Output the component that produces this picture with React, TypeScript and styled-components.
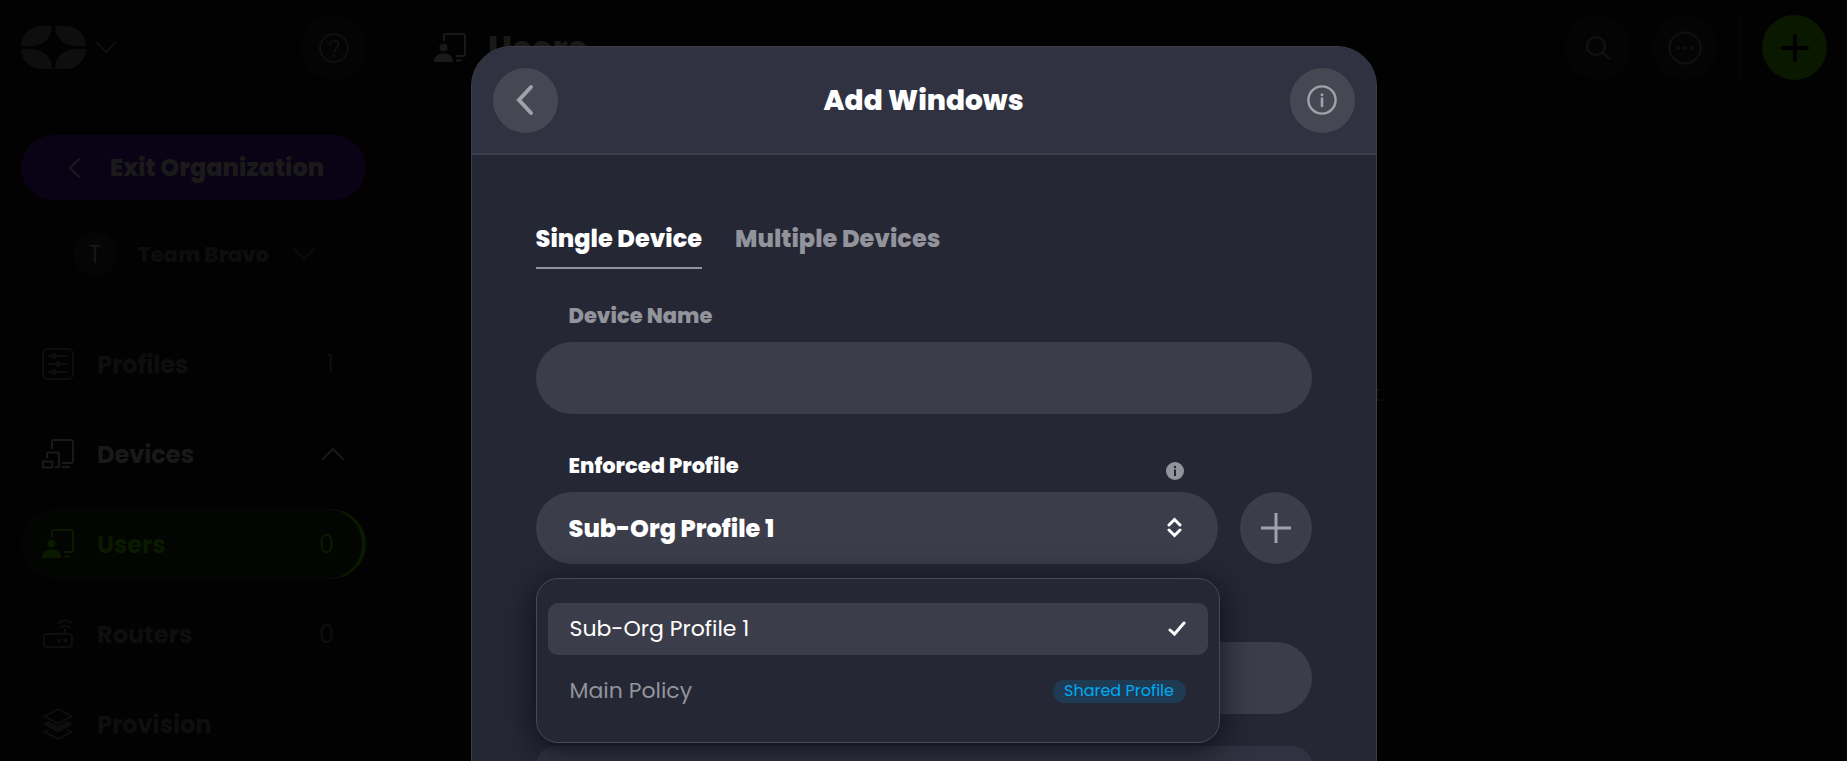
import React, { useState } from "react";
import styled, { createGlobalStyle } from "styled-components";

const GlobalStyle = createGlobalStyle`
  * { box-sizing: border-box; }
  html, body, #root { height: 100%; }
  body {
    margin: 0;
    overflow: hidden;
    background: #020202;
    font-family: Poppins, Inter, "Noto Sans", sans-serif;
    -webkit-font-smoothing: antialiased;
  }
  button, input, select { font: inherit; color: inherit; }
  button { border: 0; padding: 0; background: none; cursor: pointer; }
  a { color: inherit; text-decoration: none; }
  h1, h2, p, ul { margin: 0; padding: 0; }
  svg { display: block; flex: none; }
`;

const Shell = styled.div`
  display: flex;
  height: 100vh;
`;

const Sidebar = styled.aside`
  flex: 0 0 411px;
  padding: 15px 0 0 21px;
  border-right: 1px solid #060606;
  overflow: hidden;
`;

const BrandRow = styled.div`
  display: flex;
  align-items: center;
  gap: 10px;
  height: 65px;
  margin-bottom: 33px;
  padding-right: 44px;
  color: #0e0e0e;
`;

const Push = styled.span`
  flex: 1;
`;

const Divider = styled.div`
  height: 1px;
  background: #050505;
`;

const IconButton = styled.button<{ $size?: number; $bg?: string; $fg?: string }>`
  display: grid;
  place-items: center;
  flex: none;
  width: ${(p) => p.$size ?? 65}px;
  height: ${(p) => p.$size ?? 65}px;
  border-radius: 50%;
  background: ${(p) => p.$bg ?? "#040404"};
  color: ${(p) => p.$fg ?? "#101010"};
`;

const ExitButton = styled.button`
  display: flex;
  align-items: center;
  gap: 28px;
  width: 345px;
  height: 65px;
  margin: 21px 0 32px;
  padding-left: 47px;
  border-radius: 33px;
  background: #0a0315;
  color: #1a1a1a;
  font-size: 24px;
  font-weight: 800;
`;

const TeamButton = styled.button`
  display: flex;
  align-items: center;
  width: 345px;
  height: 44px;
  margin-bottom: 32px;
  padding-left: 52px;
  color: #0d0d0d;
  font-size: 21px;
  font-weight: 800;
`;

const Avatar = styled.span`
  display: grid;
  place-items: center;
  width: 44px;
  height: 44px;
  margin-right: 21px;
  border-radius: 50%;
  background: #050505;
  color: #161616;
  font-size: 24px;
  font-weight: 400;
`;

const TeamName = styled.span`
  width: 155px;
  text-align: left;
`;

const Nav = styled.nav`
  display: flex;
  flex-direction: column;
  gap: 20px;
  margin-top: 20px;
`;

const NavLink = styled.a<{ $tone: "muted" | "open" | "active" }>`
  display: flex;
  align-items: center;
  flex: none;
  gap: 23px;
  width: 345px;
  height: 70px;
  padding: 0 22px 0 21px;
  border-radius: 35px;
  color: ${(p) => ({ muted: "#0e0e0e", open: "#191919", active: "#0a1a00" })[p.$tone]};
  ${(p) =>
    p.$tone === "active" &&
    "background: #020501; box-shadow: inset -4px 0 0 #0a1a00;"}
  font-size: 24px;
  font-weight: 700;
`;

const NavToggle = styled.span`
  margin-left: auto;
`;

const NavCount = styled.span`
  margin-left: auto;
  padding-right: 10px;
  font-weight: 400;
`;

const Main = styled.main`
  flex: 1;
  display: flex;
  flex-direction: column;
  min-width: 0;
`;

const TopBar = styled.header`
  display: flex;
  align-items: center;
  gap: 22px;
  height: 95px;
  padding: 0 20px 0 23px;
`;

const TitleIcon = styled.span`
  color: #191919;
`;

const PageTitle = styled.h1`
  flex: 1;
  color: #191919;
  font-size: 34px;
  line-height: 40px;
  font-weight: 800;
`;

const BarRule = styled.span`
  width: 1px;
  height: 65px;
  background: #080808;
`;

const EmptyNote = styled.p`
  padding-top: 285px;
  text-align: center;
  color: #0f0f0f;
  font-size: 21px;
  line-height: 28px;
  white-space: nowrap;
`;

const Overlay = styled.div`
  position: fixed;
  inset: 0;
  display: flex;
  justify-content: center;
  align-items: flex-start;
  padding-top: 46px;
  overflow: hidden;
`;

const Dialog = styled.section`
  width: 906px;
  max-width: 94vw;
  border: 1px solid #3d3e4b;
  border-radius: 40px;
  background: #252735;
  color: #fff;
`;

const DialogHeader = styled.header`
  display: flex;
  align-items: center;
  justify-content: space-between;
  height: 108px;
  padding: 0 21px;
  border-bottom: 2px solid #3d3e4b;
  border-radius: 39px 39px 0 0;
  background: #313241;
`;

const DialogTitle = styled.h2`
  padding-top: 2px;
  font-size: 28px;
  line-height: 40px;
  font-weight: 800;
`;

const Form = styled.form`
  padding: 66px 64px 80px;
`;

const Tabs = styled.div`
  display: flex;
  gap: 33px;
  margin-bottom: 33px;
`;

const Tab = styled.button<{ $on?: boolean }>`
  padding-bottom: 10px;
  border-bottom: 2px solid ${(p) => (p.$on ? "#92939b" : "transparent")};
  color: ${(p) => (p.$on ? "#fff" : "#92939b")};
  font-size: 24px;
  line-height: 36px;
  font-weight: 800;
`;

const FieldRow = styled.div`
  display: flex;
  align-items: flex-end;
  gap: 22px;
  margin-bottom: 38px;
`;

const Field = styled.div`
  flex: 1;
  min-width: 0;
`;

const LabelRow = styled.div<{ $strong?: boolean }>`
  display: flex;
  justify-content: space-between;
  align-items: flex-end;
  height: 28px;
  margin-bottom: 12px;
  padding: 0 34px 0 33px;
  color: ${(p) => (p.$strong ? "#fff" : "#92939b")};
  font-size: 21px;
  line-height: 28px;
  font-weight: 800;
`;

const TextInput = styled.input`
  display: block;
  width: 100%;
  height: 72px;
  padding: 0 33px;
  border: 0;
  border-radius: 36px;
  outline: 0;
  background: #3c3d4a;
  color: #fff;
  font-size: 24px;
`;

const SelectBox = styled.div`
  position: relative;
`;

const Select = styled.select`
  display: block;
  appearance: none;
  width: 100%;
  height: 72px;
  padding: 0 33px;
  border: 0;
  border-radius: 36px;
  outline: 0;
  background: #3c3d4a;
  color: #fff;
  font-size: 24px;
  font-weight: 800;
`;

const SelectArrows = styled.span`
  position: absolute;
  top: 25px;
  right: 36px;
  pointer-events: none;
`;

const Menu = styled.ul`
  position: absolute;
  z-index: 2;
  top: 86px;
  left: 0;
  right: -2px;
  display: flex;
  flex-direction: column;
  gap: 10px;
  padding: 24px 11px 25px;
  border: 1px solid #494a56;
  border-radius: 22px;
  background: #252735;
  box-shadow: 0 6px 32px rgba(8, 6, 14, 0.75);
  list-style: none;
`;

const MenuItem = styled.li<{ $on?: boolean }>`
  display: flex;
  align-items: center;
  justify-content: space-between;
  height: 52px;
  padding: 0 22px;
  border-radius: 10px;
  background: ${(p) => (p.$on ? "#3c3d4a" : "transparent")};
  color: ${(p) => (p.$on ? "#fff" : "#92939b")};
  font-size: 22px;
  line-height: 32px;
  cursor: pointer;
`;

const Badge = styled.span`
  width: 133px;
  height: 23px;
  border-radius: 12px;
  background: #1e3b53;
  color: #00a9f4;
  font-size: 16px;
  line-height: 22px;
  text-align: center;
`;

const Panel = styled.div`
  height: 120px;
  margin-top: -6px;
  border-radius: 20px;
  background: #313241;
`;

type StrokeProps = { d: string; w: number; h: number; sw: number };
const Stroke = ({ d, w, h, sw }: StrokeProps) => (
  <svg width={w} height={h} viewBox={`0 0 ${w} ${h}`} fill="none" stroke="currentColor" strokeWidth={sw} strokeLinecap="round" strokeLinejoin="miter">
    <path d={d} />
  </svg>
);

const Logo = () => (
  <svg width="65" height="43" viewBox="0 0 65 43" fill="currentColor">
    <path d="M0 20A20 20 0 0 1 20 0H31V1A20 19 0 0 1 11 20Z" />
    <path d="M65 20A20 20 0 0 0 45 0H34V1A20 19 0 0 0 54 20Z" />
    <path d="M0 23A20 20 0 0 0 20 43H31V42A20 19 0 0 0 11 23Z" />
    <path d="M65 23A20 20 0 0 1 45 43H34V42A20 19 0 0 1 54 23Z" />
  </svg>
);

const UserScreen = () => (
  <svg width="32" height="30" viewBox="0 0 32 30" fill="none" stroke="currentColor" strokeWidth="2">
    <path d="M10 8V2.500Q10 1 11.500 1H29.500Q31 1 31 2.500V21.500Q31 23 29.500 23H22M22 27.500H28" />
    <circle cx="9.500" cy="14.500" r="4" fill="currentColor" stroke="none" />
    <path d="M0 29V27C1 22 5 20.500 9.500 20.500S18 22 19 27V29Z" fill="currentColor" stroke="none" />
  </svg>
);

const Sliders = () => (
  <svg width="32" height="32" viewBox="0 0 32 32" fill="none" stroke="currentColor" strokeWidth="2" strokeLinecap="round">
    <rect x="1" y="1" width="30" height="30" rx="5" />
    <path d="M7 8H25M7 16H25M7 24H25" />
    <g fill="currentColor" stroke="none">
      <circle cx="12" cy="8" r="3" />
      <circle cx="16" cy="16" r="3" />
      <circle cx="12" cy="24" r="3" />
    </g>
  </svg>
);

const DevicesIcon = () => (
  <svg width="32" height="30" viewBox="0 0 32 30" fill="none" stroke="currentColor" strokeWidth="2">
    <path d="M10 10V3Q10 1 12 1H29Q31 1 31 3V22Q31 24 29 24H20M20 28H28" />
    <path d="M5 19V15Q5 13.500 6.500 13.500H15.500Q17 13.500 17 15V27Q17 28 16 28H13" />
    <rect x="1" y="22.500" width="9.500" height="6" />
  </svg>
);

const RouterIcon = () => (
  <svg width="32" height="30" viewBox="0 0 32 30" fill="none" stroke="currentColor" strokeWidth="2" strokeLinecap="round">
    <rect x="2" y="15" width="28" height="13" rx="3" />
    <path d="M23 14V10M18.500 8.500Q23 5 27.500 8.500M16 4Q23 -1 30 4" />
    <circle cx="17" cy="21.500" r="2" fill="currentColor" stroke="none" />
    <circle cx="23.500" cy="21.500" r="2" fill="currentColor" stroke="none" />
  </svg>
);

const LayersIcon = () => (
  <svg width="32" height="32" viewBox="0 0 32 32" fill="none" stroke="currentColor" strokeWidth="2">
    <path d="M16 1.200L29.500 8.500L16 15.500L2.500 8.500Z" />
    <path d="M0.500 16L6 13L16 18L26 13L31.500 16L16 24.500Z" fill="currentColor" stroke="none" />
    <path d="M7 21.500L2.500 24L16 31L29.500 24L25 21.500" />
  </svg>
);

const HelpIcon = () => (
  <svg width="30" height="30" viewBox="0 0 30 30" fill="none" stroke="currentColor" strokeWidth="2">
    <circle cx="15" cy="15" r="14" />
    <path d="M10.500 12.500C10.500 6.500 19.500 6.500 19.500 12C19.500 15 15 15.500 15 19.500" />
    <circle cx="15" cy="23" r="1.400" fill="currentColor" stroke="none" />
  </svg>
);

const InfoIcon = () => (
  <svg width="30" height="30" viewBox="0 0 30 30" fill="none" stroke="currentColor" strokeWidth="2.400">
    <circle cx="15" cy="15" r="13.600" />
    <path d="M15 13.500V21" strokeLinecap="round" strokeWidth="2.600" />
    <circle cx="15" cy="9.800" r="1.500" fill="currentColor" stroke="none" />
  </svg>
);

const InfoDot = () => (
  <svg width="18" height="18" viewBox="0 0 18 18">
    <circle cx="9" cy="9" r="9" fill="#92939b" />
    <path d="M9 7.500V14" stroke="#252735" strokeWidth="2" />
    <circle cx="9" cy="5" r="1.200" fill="#252735" />
  </svg>
);

const SearchIcon = () => (
  <svg width="26" height="26" viewBox="0 0 26 26" fill="none" stroke="currentColor" strokeWidth="2.400" strokeLinecap="round">
    <circle cx="11" cy="11" r="9" />
    <path d="M17.500 17.500L24 24" />
  </svg>
);

const MoreIcon = () => (
  <svg width="34" height="34" viewBox="0 0 34 34" fill="none" stroke="currentColor" strokeWidth="2.200">
    <circle cx="17" cy="17" r="15.500" />
    <g fill="currentColor" stroke="none">
      <circle cx="10.300" cy="17" r="2" />
      <circle cx="17" cy="17" r="2" />
      <circle cx="23.700" cy="17" r="2" />
    </g>
  </svg>
);

const PlusIcon = () => (
  <svg width="30" height="30" viewBox="0 0 30 30" stroke="currentColor" strokeWidth="3">
    <path d="M15 0V30M0 15H30" />
  </svg>
);

const profiles = [
  { name: "Sub-Org Profile 1", shared: false },
  { name: "Main Policy", shared: true },
];

function SidePanel() {
  return (
    <Sidebar>
      <BrandRow>
        <Logo />
        <Stroke w={20} h={12} sw={2} d="M1 1L10 10L19 1" />
        <Push />
        <IconButton aria-label="Help"><HelpIcon /></IconButton>
      </BrandRow>
      <Divider />
      <ExitButton>
        <Stroke w={14} h={22} sw={2} d="M11 2L2 11L11 20" />
        Exit Organization
      </ExitButton>
      <TeamButton>
        <Avatar>T</Avatar>
        <TeamName>Team Bravo</TeamName>
        <Stroke w={22} h={12} sw={2} d="M1 1L11 11L21 1" />
      </TeamButton>
      <Divider />
      <Nav>
        <NavLink href="#profiles" $tone="muted"><Sliders />Profiles<NavCount>1</NavCount></NavLink>
        <NavLink href="#devices" $tone="open">
          <DevicesIcon />Devices
          <NavToggle><Stroke w={22} h={12} sw={2} d="M1 11L11 1L21 11" /></NavToggle>
        </NavLink>
        <NavLink href="#users" $tone="active"><UserScreen />Users<NavCount>0</NavCount></NavLink>
        <NavLink href="#routers" $tone="muted"><RouterIcon />Routers<NavCount>0</NavCount></NavLink>
        <NavLink href="#provision" $tone="muted"><LayersIcon />Provision</NavLink>
      </Nav>
    </Sidebar>
  );
}

function AddWindowsDialog() {
  const [profile, setProfile] = useState("Sub-Org Profile 1");

  return (
    <Dialog role="dialog" aria-labelledby="dialog-title">
      <DialogHeader>
        <IconButton aria-label="Back" $bg="#464752" $fg="#a0a1a9">
          <Stroke w={20} h={32} sw={4} d="M16 3L4 16L16 29" />
        </IconButton>
        <DialogTitle id="dialog-title">Add Windows</DialogTitle>
        <IconButton aria-label="Information" $bg="#464752" $fg="#a0a1a9"><InfoIcon /></IconButton>
      </DialogHeader>
      <Form onSubmit={(e) => e.preventDefault()}>
        <Tabs role="tablist">
          <Tab type="button" role="tab" aria-selected $on>Single Device</Tab>
          <Tab type="button" role="tab" aria-selected={false}>Multiple Devices</Tab>
        </Tabs>
        <FieldRow>
          <Field>
            <LabelRow><label htmlFor="device-name">Device Name</label></LabelRow>
            <TextInput id="device-name" />
          </Field>
        </FieldRow>
        <FieldRow>
          <Field>
            <LabelRow $strong>
              <label htmlFor="profile">Enforced Profile</label>
              <InfoDot />
            </LabelRow>
            <SelectBox>
              <Select id="profile" value={profile} onChange={(e) => setProfile(e.target.value)}>
                {profiles.map((p) => <option key={p.name}>{p.name}</option>)}
              </Select>
              <SelectArrows>
                <Stroke w={15} h={21} sw={3} d="M2 8L7.500 2.500L13 8M2 13L7.500 18.500L13 13" />
              </SelectArrows>
              <Menu role="listbox" aria-label="Profiles">
                {profiles.map((p) => (
                  <MenuItem key={p.name} role="option" aria-selected={p.name === profile} $on={p.name === profile} onClick={() => setProfile(p.name)}>
                    {p.name}
                    {p.name === profile && <Stroke w={18} h={16} sw={3} d="M2 9L6.500 13L16 2" />}
                    {p.shared && <Badge>Shared Profile</Badge>}
                  </MenuItem>
                ))}
              </Menu>
            </SelectBox>
          </Field>
          <IconButton type="button" aria-label="New profile" $size={72} $bg="#3c3d4a" $fg="#a0a1a9">
            <PlusIcon />
          </IconButton>
        </FieldRow>
        <FieldRow>
          <Field>
            <LabelRow />
            <TextInput aria-label="Second profile" />
          </Field>
        </FieldRow>
        <Panel />
      </Form>
    </Dialog>
  );
}

export default function App() {
  return (
    <>
      <GlobalStyle />
      <Shell>
        <SidePanel />
        <Main>
          <TopBar>
            <TitleIcon><UserScreen /></TitleIcon>
            <PageTitle>Users</PageTitle>
            <IconButton aria-label="Search"><SearchIcon /></IconButton>
            <IconButton aria-label="More"><MoreIcon /></IconButton>
            <BarRule />
            <IconButton aria-label="Add" $bg="#0a1800" $fg="#000">
              <Stroke w={30} h={30} sw={4} d="M15 3V27M3 15H27" />
            </IconButton>
          </TopBar>
          <EmptyNote>No devices have been added to this account yet.</EmptyNote>
        </Main>
      </Shell>
      <Overlay>
        <AddWindowsDialog />
      </Overlay>
    </>
  );
}
